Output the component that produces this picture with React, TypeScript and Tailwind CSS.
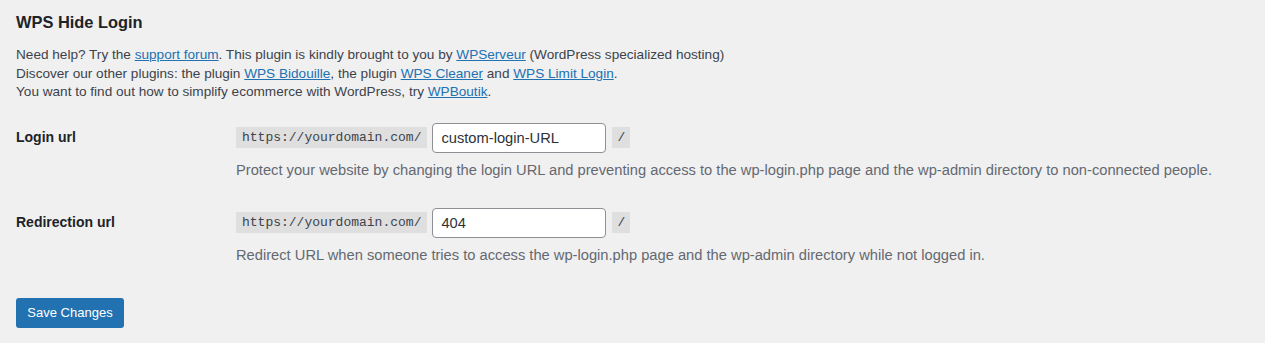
import React, { useState } from 'react';

function UrlRow({
  label,
  value,
  onChange,
  help,
}: {
  label: string;
  value: string;
  onChange: (v: string) => void;
  help: string;
}) {
  return (
    <div className="flex">
      <div className="w-[220px] shrink-0 h-[30px] flex items-center text-[14px] font-semibold text-[#1d2327]">
        {label}
      </div>
      <div className="flex flex-col">
        <div className="flex items-center h-[30px]">
          <code className="bg-[#dfdfe0] text-[#3c434a] font-['Liberation_Mono',monospace] text-[13px] leading-[16px] pt-[3px] pb-[2px] px-[6px]">
            https://yourdomain.com/
          </code>
          <input
            type="text"
            value={value}
            onChange={(e) => onChange(e.target.value)}
            className="ml-[5px] w-[174px] h-[30px] bg-white border border-[#8c8f94] rounded-[4px] px-[8px] text-[14.7px] text-[#2c3338] outline-none"
          />
          <code className="ml-[6px] bg-[#dfdfe0] text-[#3c434a] font-['Liberation_Mono',monospace] text-[13px] leading-[16px] pt-[3px] pb-[2px] px-[5px]">
            /
          </code>
        </div>
        <p className="mt-[7px] text-[14.7px] leading-[20px] text-[#646970]">{help}</p>
      </div>
    </div>
  );
}

export default function App() {
  const [loginUrl, setLoginUrl] = useState('custom-login-URL');
  const [redirectUrl, setRedirectUrl] = useState('404');

  return (
    <div className="min-h-screen bg-[#f0f0f1] font-['Liberation_Sans',Arial,sans-serif] text-[#3c434a]">
      <div className="px-[16px] pt-[11px]">
        <h2 className="text-[16.4px] leading-[22px] font-semibold text-[#1d2327]">WPS Hide Login</h2>

        <p className="mt-[13px] text-[13.6px] leading-[18.5px]">
          Need help? Try the{' '}
          <a href="#" className="text-[#2271b1] underline">support forum</a>. This plugin is kindly brought to you by{' '}
          <a href="#" className="text-[#2271b1] underline">WPServeur</a> (WordPress specialized hosting)
          <br />
          Discover our other plugins: the plugin{' '}
          <a href="#" className="text-[#2271b1] underline">WPS Bidouille</a>, the plugin{' '}
          <a href="#" className="text-[#2271b1] underline">WPS Cleaner</a> and{' '}
          <a href="#" className="text-[#2271b1] underline">WPS Limit Login</a>.
          <br />
          You want to find out how to simplify ecommerce with WordPress, try{' '}
          <a href="#" className="text-[#2271b1] underline">WPBoutik</a>.
        </p>

        <div className="mt-[21px] flex flex-col gap-[28px]">
          <UrlRow
            label="Login url"
            value={loginUrl}
            onChange={setLoginUrl}
            help="Protect your website by changing the login URL and preventing access to the wp-login.php page and the wp-admin directory to non-connected people."
          />
          <UrlRow
            label="Redirection url"
            value={redirectUrl}
            onChange={setRedirectUrl}
            help="Redirect URL when someone tries to access the wp-login.php page and the wp-admin directory while not logged in."
          />
        </div>

        <button className="mt-[33px] h-[30px] w-[108px] rounded-[3px] bg-[#2271b1] text-white text-[13px]">
          Save Changes
        </button>
      </div>
    </div>
  );
}
